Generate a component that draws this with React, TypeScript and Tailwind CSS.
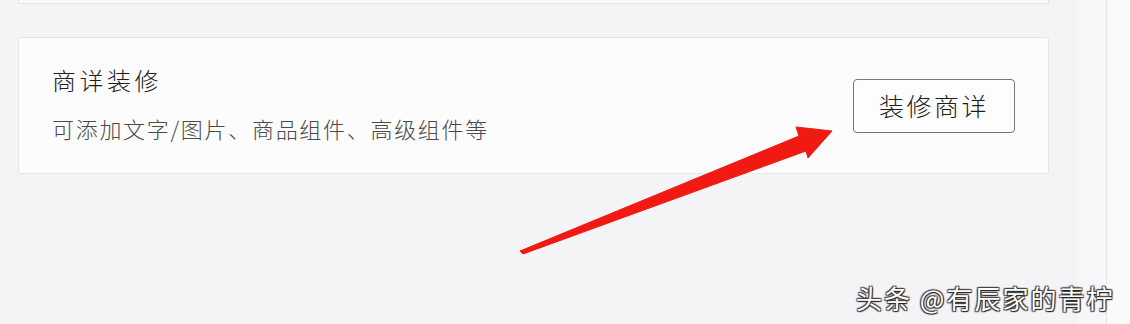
export default function App() {
  return (
    <div
      className="relative flex w-[1130px] h-[324px] overflow-hidden bg-[#f4f3f6]"
      style={{ fontFamily: '"Noto Sans CJK SC", "Noto Sans", sans-serif' }}
    >
      <div className="flex-1 pl-[18px] pr-[28px]">
        {/* bottom edge of the card above */}
        <div className="h-[4px] border-x border-b border-[#e4e4e8] bg-[#fafafb] rounded-b-[2px]" />

        <div className="mt-[33px] h-[137px] flex items-center justify-between border border-[#e6e6ea] bg-[#fcfcfd] rounded-[2px] pl-[33px] pr-[33px]">
          <div className="flex flex-col -mt-[4px]">
            <div className="text-[24px] leading-[28px] tracking-[3.5px] font-light text-[#1e1e1e]">商详装修</div>
            <div className="mt-[20px] text-[22px] leading-[28px] tracking-[1.7px] font-light text-[#4a4a4a]">
              可添加文字/图片、商品组件、高级组件等
            </div>
          </div>
          <button className="w-[162px] h-[54px] flex items-center justify-center border border-[#75757a] rounded-[4px] bg-[#fdfdfd] text-[25px] tracking-[2.5px] font-light text-[#1e1e1e]">
            装修商详
          </button>
        </div>
      </div>

      <div className="w-[53px] flex">
        <div className="w-[29px] bg-[#f7f6f8]" />
        <div className="flex-1 border-l border-[#e6e6e9] bg-[#fafafa]" />
      </div>

      {/* red annotation arrow */}
      <svg className="absolute left-0 top-0" width="1130" height="324" viewBox="0 0 1130 324">
        <polygon
          points="520,251 799,136 796,127 832,131 808,158 806,151 523,254"
          fill="#f01a12"
          stroke="#f01a12"
          strokeWidth="1"
          strokeLinejoin="round"
        />
      </svg>

      <div
        className="absolute left-[856px] top-[282px] text-[26px] leading-[32px] tracking-[2px] text-white whitespace-nowrap"
        style={{ textShadow: "1px 1px 1px #222, -1px -1px 1px #444, 1px -1px 1px #444, -1px 1px 1px #444" }}
      >
        头条 @有辰家的青柠
      </div>
    </div>
  )
}
